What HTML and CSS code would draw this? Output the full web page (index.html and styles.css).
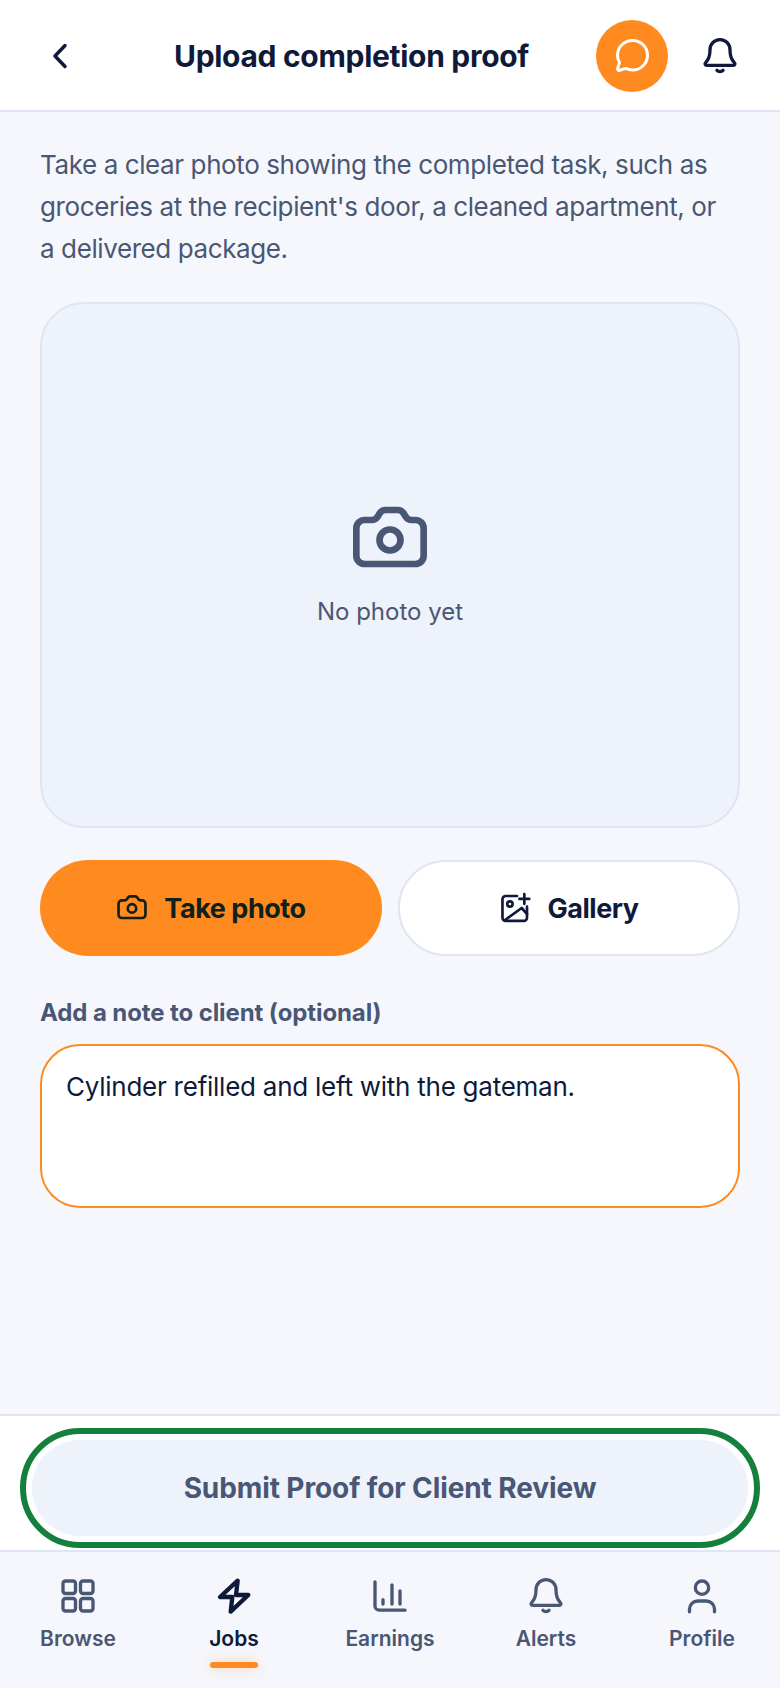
FILE: index.html
```html
<!DOCTYPE html>
<html lang="en">
<head>
	<meta charset="UTF-8">
	<title>Upload completion proof</title>
	<link rel="stylesheet" href="styles.css">
</head>
<body>
	<svg class="defs" width="0" height="0">
		<symbol id="camera" viewBox="0 0 24 24">
			<path d="M4.400 6.300H6.600c.7 0 1.300-.4 1.700-1l.6-1c.4-.6 1-1 1.700-1h3.800c.7 0 1.300.4 1.700 1l.6 1c.4.6 1 1 1.700 1h1.200a2.500 2.500 0 0 1 2.500 2.500v8.200a2.500 2.500 0 0 1-2.500 2.500H4.400a2.500 2.500 0 0 1-2.500-2.500V8.800a2.500 2.500 0 0 1 2.500-2.500z"/>
			<circle cx="12" cy="12.300" r="3.150"/>
		</symbol>
		<symbol id="bell" viewBox="0 0 24 24">
			<path d="M12 2.200c-3.600 0-6 2.800-6 6.200 0 3.900-.7 5.600-2.600 7.600-.7.7-.3 1.600.6 1.600h16c.9 0 1.300-.9.600-1.600-1.900-2-2.600-3.700-2.600-7.600 0-3.400-2.400-6.200-6-6.200z"/>
			<path d="M10.200 20.600c.9 1 2.700 1 3.600 0"/>
		</symbol>
	</svg>

	<div class="app">
		<header class="topbar">
			<button class="back" aria-label="Back">
				<svg class="icon-chevron" viewBox="0 0 16 26"><path d="M13 2.500 3 13l10 10.500"/></svg>
			</button>
			<h1 class="title">Upload completion proof</h1>
			<button class="chat" aria-label="Chat">
				<svg class="icon-chat" viewBox="0 0 34 34"><path d="M17.500 1.500C9.200 1.500 2.500 8 2.500 16.200c0 2.700.7 5 2 7.200l-1.800 6c-.4 1.300.6 2.300 1.900 1.900l6.300-1.900c2 1 4.200 1.600 6.600 1.600 8.300 0 15-6.500 15-14.800S25.800 1.500 17.500 1.500z"/></svg>
			</button>
			<button class="bell-btn" aria-label="Notifications">
				<svg class="icon-bell"><use href="#bell"/></svg>
			</button>
		</header>

		<main class="content">
			<p class="intro">Take a clear photo showing the completed task, such as groceries at the recipient's door, a cleaned apartment, or a delivered package.</p>

			<div class="preview">
				<svg class="icon-preview"><use href="#camera"/></svg>
				<span>No photo yet</span>
			</div>

			<div class="actions">
				<button class="btn btn-primary">
					<svg class="icon-btn"><use href="#camera"/></svg>
					Take photo
				</button>
				<button class="btn btn-outline">
					<svg class="icon-btn" viewBox="0 0 24 24">
						<path d="M13.500 3H5a2.400 2.400 0 0 0-2.400 2.400v13.900A2.400 2.400 0 0 0 5 21.700h13.600a2.400 2.400 0 0 0 2.400-2.400V11"/>
						<circle cx="8.200" cy="9" r="2"/>
						<path d="M4.500 21 17 12l4 4.500"/>
						<path d="M19 1.500v7.400M15.300 5.200h7.400"/>
					</svg>
					Gallery
				</button>
			</div>

			<label class="note-label" for="note">Add a note to client (optional)</label>
			<textarea class="note" id="note">Cylinder refilled and left with the gateman.</textarea>
		</main>

		<div class="submit-bar">
			<button class="submit">Submit Proof for Client Review</button>
		</div>

		<nav class="tabs">
			<a class="tab">
				<svg class="icon-tab" viewBox="0 0 24 24">
					<rect x="3" y="3" width="7.500" height="7.500" rx="1.500"/>
					<rect x="13.500" y="3" width="7.500" height="7.500" rx="1.500"/>
					<rect x="3" y="13.500" width="7.500" height="7.500" rx="1.500"/>
					<rect x="13.500" y="13.500" width="7.500" height="7.500" rx="1.500"/>
				</svg>
				Browse
			</a>
			<a class="tab tab-active">
				<svg class="icon-tab" viewBox="0 0 24 24"><path d="M14.200 2.800 3.600 12.600H11l-1 8.800 10.600-10h-7.400z"/></svg>
				Jobs
			</a>
			<a class="tab">
				<svg class="icon-tab" viewBox="0 0 24 24">
					<path d="M3 3.500V18a2.500 2.500 0 0 0 2.500 2.500H21"/>
					<path d="M7.800 14.200v2.600M13.200 5.300v11.500M18 9v7.800"/>
				</svg>
				Earnings
			</a>
			<a class="tab">
				<svg class="icon-tab"><use href="#bell"/></svg>
				Alerts
			</a>
			<a class="tab">
				<svg class="icon-tab" viewBox="0 0 24 24">
					<circle cx="12" cy="7" r="4"/>
					<path d="M4.500 21.500v-1.500c0-2.800 2.200-5 5-5h5c2.800 0 5 2.200 5 5v1.500"/>
				</svg>
				Profile
			</a>
		</nav>
	</div>
</body>
</html>
```

FILE: styles.css
```css
* {
	box-sizing: border-box;
}
body {
	margin: 0;
	background-color: #f5f7fc;
	font-family: Inter, "Noto Sans", sans-serif;
	color: #0f1a3a;
}
button {
	font-family: inherit;
	border: 0;
	background: none;
	padding: 0;
}
svg {
	fill: none;
	stroke: currentColor;
	stroke-linecap: round;
	stroke-linejoin: round;
}
.defs {
	display: block;
	height: 0;
}
.app {
	display: flex;
	flex-direction: column;
	height: 1688px;
}

/* header */
.topbar {
	display: flex;
	align-items: center;
	height: 112px;
	padding: 2px 43px 0 52px;
	background-color: #fff;
	border-bottom: 2px solid #dfe5f2;
}
.back {
	display: flex;
	width: 16px;
	color: #0f1a3a;
}
.icon-chevron {
	width: 16px;
	height: 26px;
	stroke-width: 3.500;
}
.title {
	flex: 1;
	margin: 0 0 0 106px;
	font-size: 30px;
	font-weight: 700;
	letter-spacing: -.3px;
	white-space: nowrap;
}
.chat {
	display: flex;
	align-items: center;
	justify-content: center;
	width: 72px;
	height: 72px;
	margin-right: 35px;
	border-radius: 50%;
	background-color: #ff8a20;
	color: #fff;
}
.icon-chat {
	width: 34px;
	height: 34px;
	stroke-width: 3;
}
.bell-btn {
	display: flex;
	color: #0f1a3a;
}
.icon-bell {
	width: 40px;
	height: 40px;
	stroke-width: 2;
	margin: 0 -3px;
}

/* main */
.content {
	flex: 1;
	display: flex;
	flex-direction: column;
	padding: 32px 40px 0;
}
.intro {
	max-width: 690px;
	margin: 0 0 32px;
	font-size: 26px;
	line-height: 42px;
	color: #4a5774;
	letter-spacing: -.4px;
}
.preview {
	display: flex;
	flex-direction: column;
	align-items: center;
	justify-content: center;
	height: 526px;
	background-color: #edf2fb;
	border: 2px solid #dfe5f2;
	border-radius: 44px;
	color: #4a5774;
	font-size: 24px;
	padding-bottom: 6px;
}
.icon-preview {
	width: 80px;
	height: 80px;
	stroke-width: 2;
	margin-bottom: 18px;
}
.actions {
	display: grid;
	grid-template-columns: 1fr 1fr;
	gap: 16px;
	margin-top: 32px;
}
.btn {
	display: flex;
	align-items: center;
	justify-content: center;
	gap: 16px;
	height: 96px;
	border-radius: 48px;
	font-size: 27px;
	font-weight: 700;
	letter-spacing: -.45px;
	color: #0f1a3a;
}
.btn-primary {
	background-color: #ff8a20;
	color: #10201a;
}
.btn-outline {
	background-color: #fff;
	border: 2px solid #dfe5f2;
}
.icon-btn {
	width: 32px;
	height: 32px;
	stroke-width: 2;
}
.note-label {
	margin-top: 42px;
	font-size: 24px;
	font-weight: 700;
	line-height: 30px;
	letter-spacing: -.1px;
	color: #4a5774;
}
.note {
	height: 164px;
	margin-top: 16px;
	padding: 25px 24px;
	background-color: #fff;
	border: 2px solid #ff8a20;
	border-radius: 40px;
	outline: 0;
	resize: none;
	font-family: inherit;
	font-size: 26px;
	line-height: 32px;
	letter-spacing: -.25px;
	color: #0f1a3a;
}

/* submit bar */
.submit-bar {
	height: 138px;
	padding: 24px 32px 0;
	background-color: #fff;
	border-top: 2px solid #dfe5f2;
	border-bottom: 2px solid #dfe5f2;
}
.submit {
	display: block;
	width: 100%;
	height: 96px;
	border-radius: 48px;
	background-color: #edf2fb;
	outline: 6px solid #15803d;
	outline-offset: 6px;
	font-size: 28px;
	font-weight: 700;
	letter-spacing: -.1px;
	color: #4a5774;
}

/* bottom tabs */
.tabs {
	display: grid;
	grid-template-columns: repeat(5, 1fr);
	height: 136px;
	padding-top: 24px;
}
.tab {
	position: relative;
	display: flex;
	flex-direction: column;
	align-items: center;
	gap: 8px;
	font-size: 21px;
	font-weight: 600;
	line-height: 30px;
	color: #4a5774;
}
.icon-tab {
	width: 40px;
	height: 40px;
	stroke-width: 2;
}
.tab-active {
	color: #0f1a3a;
}
.tab-active .icon-tab {
	stroke-width: 2.600;
}
.tab-active::after {
	content: "";
	position: absolute;
	left: 54px;
	top: 86px;
	width: 48px;
	height: 6px;
	border-radius: 3px;
	background-color: #ff8a20;
	box-shadow: 0 0 12px rgba(255, 138, 32, .35);
}
```
